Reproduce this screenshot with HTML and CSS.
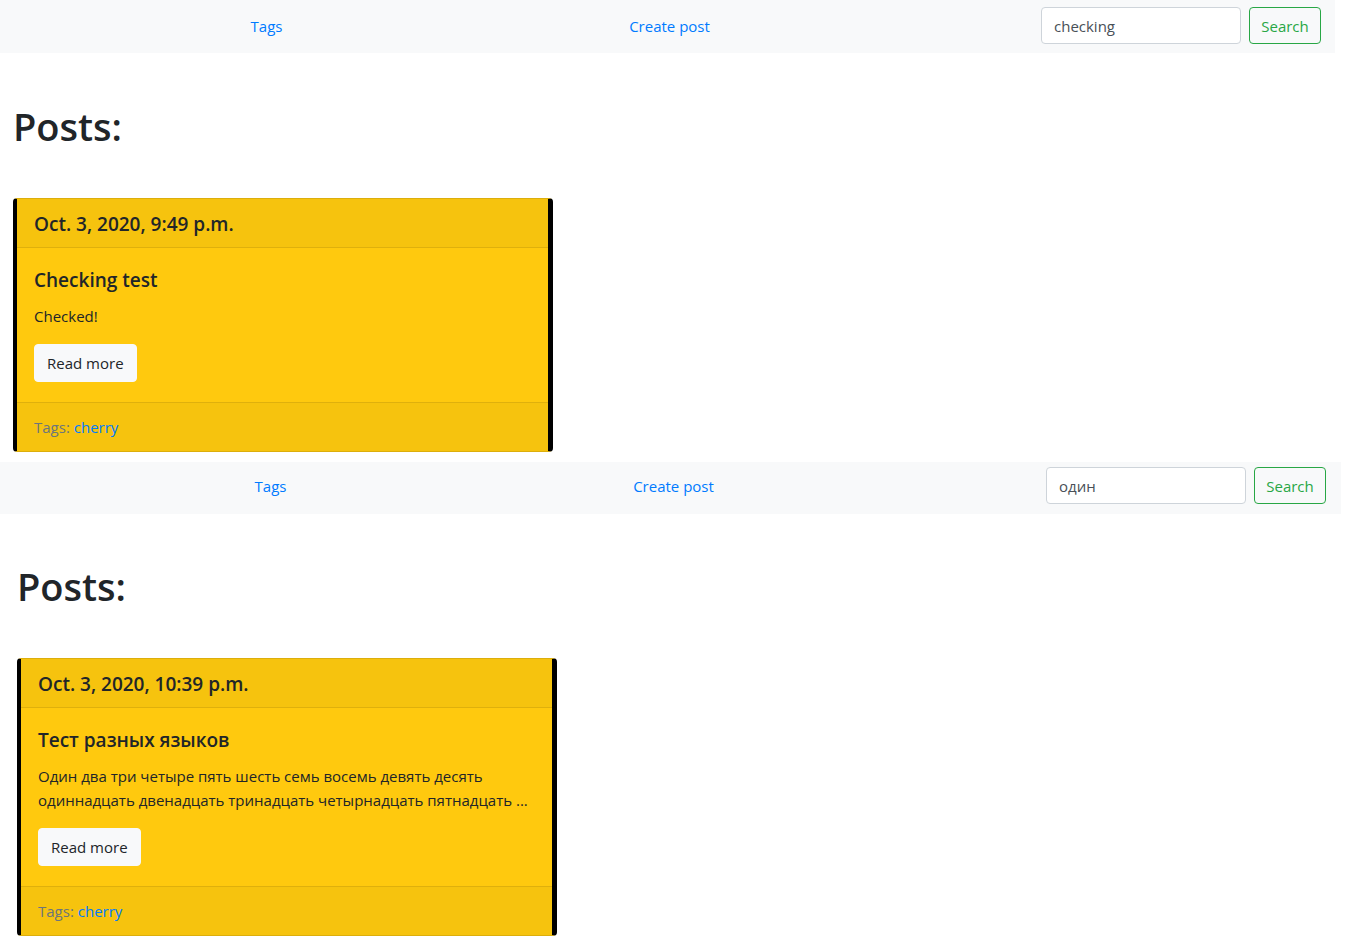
FILE: index.html
```html
<!DOCTYPE html>
<html lang="ru">
<head>
<meta charset="utf-8">
<title>Posts</title>
<link rel="stylesheet" href="styles.css">
</head>
<body>
<section class="shot shot-one">
  <nav class="navbar">
    <ul class="nav-links">
      <li><a href="#">Tags</a></li>
      <li><a href="#">Create post</a></li>
    </ul>
    <form class="search">
      <input class="search-input" type="text" value="checking">
      <button class="search-btn" type="button">Search</button>
    </form>
  </nav>
  <main class="content">
    <h1 class="page-title">Posts:</h1>
    <div class="card">
      <div class="card-header"><h5 class="card-date">Oct. 3, 2020, 9:49 p.m.</h5></div>
      <div class="card-body">
        <h5 class="card-title">Checking test</h5>
        <p class="card-text">Checked!</p>
        <a class="btn-light" href="#">Read more</a>
      </div>
      <div class="card-footer"><span class="muted">Tags:</span> <a href="#">cherry</a></div>
    </div>
  </main>
</section>

<section class="shot shot-two">
  <nav class="navbar">
    <ul class="nav-links">
      <li><a href="#">Tags</a></li>
      <li><a href="#">Create post</a></li>
    </ul>
    <form class="search">
      <input class="search-input" type="text" value="один">
      <button class="search-btn" type="button">Search</button>
    </form>
  </nav>
  <main class="content">
    <h1 class="page-title">Posts:</h1>
    <div class="card">
      <div class="card-header"><h5 class="card-date">Oct. 3, 2020, 10:39 p.m.</h5></div>
      <div class="card-body">
        <h5 class="card-title">Тест разных языков</h5>
        <p class="card-text">Один два три четыре пять шесть семь восемь девять десять одиннадцать двенадцать тринадцать четырнадцать пятнадцать ...</p>
        <a class="btn-light" href="#">Read more</a>
      </div>
      <div class="card-footer"><span class="muted">Tags:</span> <a href="#">cherry</a></div>
    </div>
  </main>
</section>
</body>
</html>
```

FILE: styles.css
```css
* { box-sizing: border-box; }

body {
  margin: 0;
  background: #fff;
  color: #212529;
  font-family: "Open Sans", "Noto Sans", sans-serif;
  font-size: 15px;
  line-height: 24px;
}

a { color: #007bff; text-decoration: none; }

.shot-two { padding-top: 10px; }

.navbar {
  display: flex;
  align-items: center;
  background: #f8f9fa;
  height: 53px;
  padding: 7px 14px 9px 0;
  width: 1335px;
}
.shot-two .navbar {
  height: 52px;
  padding: 5px 15px 10px 0;
  width: 1341px;
}

.nav-links {
  display: flex;
  list-style: none;
  margin: 0 0 0 65px;
  padding: 0;
}
.shot-two .nav-links { margin-left: 69px; }
.nav-links li {
  width: 403px;
  text-align: center;
}

.search {
  display: flex;
  gap: 8px;
  margin: 0 0 0 auto;
}
.search-input {
  width: 200px;
  height: 37px;
  padding: 0 12px;
  border: 1px solid #ced4da;
  border-radius: 4px;
  background: #fff;
  color: #495057;
  font: inherit;
}
.search-btn {
  height: 37px;
  width: 72px;
  padding: 0;
  border: 1px solid #28a745;
  border-radius: 4px;
  background: transparent;
  color: #28a745;
  font: inherit;
}

.content { padding: 0 13px; }
.shot-two .content { padding-left: 17px; }

.page-title {
  margin: 49px 0 0;
  font-size: 38px;
  line-height: 48px;
  font-weight: 600;
}
.shot-two .page-title { margin-top: 48px; }

.card {
  width: 540px;
  margin-top: 48px;
  background: #ffc90e;
  border: 1px solid #dcae0c;
  border-left: 4px solid #000;
  border-right: 5px solid #000;
  border-radius: 4px;
}

.card-header {
  background: #f6c30e;
  border-bottom: 1px solid #dfb00c;
  padding: 13px 17px 11px;
}
.card-date, .card-title {
  margin: 0;
  font-size: 19px;
  line-height: 24px;
  font-weight: 600;
}

.card-body { padding: 20px 17px; }
.card-title { margin-bottom: 12px; }
.card-text { margin: 0 0 16px; }

.btn-light {
  display: inline-block;
  padding: 6px 12px;
  border: 1px solid #f8f9fa;
  border-radius: 4px;
  background: #f8f9fa;
  color: #212529;
}

.card-footer {
  background: #f6c30e;
  border-top: 1px solid #dfb00c;
  padding: 12px 17px;
}
.muted { color: #6c757d; }
```
